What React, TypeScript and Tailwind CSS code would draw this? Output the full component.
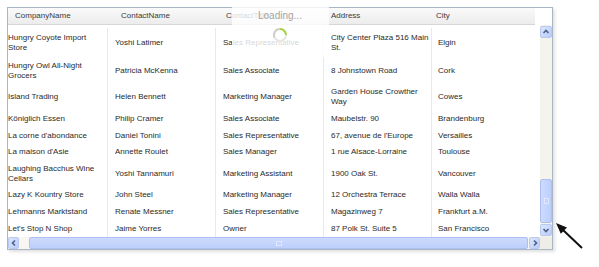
import React from 'react';

type Row = {
  h: string;
  cells: string[];
};

const rows: Row[] = [
  { h: 'h-[29px]', cells: ['Hungry Coyote Import\nStore', 'Yoshi Latimer', 'Sales Representative', 'City Center Plaza 516 Main\nSt.', 'Elgin'] },
  { h: 'h-[27px]', cells: ['Hungry Owl All-Night\nGrocers', 'Patricia McKenna', 'Sales Associate', '8 Johnstown Road', 'Cork'] },
  { h: 'h-[26px]', cells: ['Island Trading', 'Helen Bennett', 'Marketing Manager', 'Garden House Crowther\nWay', 'Cowes'] },
  { h: 'h-[17px]', cells: ['Königlich Essen', 'Philip Cramer', 'Sales Associate', 'Maubelstr. 90', 'Brandenburg'] },
  { h: 'h-[17px]', cells: ['La corne d\'abondance', 'Daniel Tonini', 'Sales Representative', '67, avenue de l\'Europe', 'Versailles'] },
  { h: 'h-[16px]', cells: ['La maison d\'Asie', 'Annette Roulet', 'Sales Manager', '1 rue Alsace-Lorraine', 'Toulouse'] },
  { h: 'h-[27px]', cells: ['Laughing Bacchus Wine\nCellars', 'Yoshi Tannamuri', 'Marketing Assistant', '1900 Oak St.', 'Vancouver'] },
  { h: 'h-[16px]', cells: ['Lazy K Kountry Store', 'John Steel', 'Marketing Manager', '12 Orchestra Terrace', 'Walla Walla'] },
  { h: 'h-[17px]', cells: ['Lehmanns Marktstand', 'Renate Messner', 'Sales Representative', 'Magazinweg 7', 'Frankfurt a.M.'] },
  { h: 'h-[17px]', cells: ['Let\'s Stop N Shop', 'Jaime Yorres', 'Owner', '87 Polk St. Suite 5', 'San Francisco'] },
];

const bodyCols = [
  'w-[100px] pl-0 border-r border-[#e9e9e9]',
  'w-[108px] pl-[7px] border-r border-[#e9e9e9]',
  'w-[108px] pl-[7px] border-r border-[#e9e9e9]',
  'w-[108px] pl-[7px] border-r border-[#e9e9e9]',
  'flex-1 pl-[6px]',
];

const headers = [
  { label: 'CompanyName', w: 'w-[106px]' },
  { label: 'ContactName', w: 'w-[105px]' },
  { label: 'ContactTitle', w: 'w-[105px]' },
  { label: 'Address', w: 'w-[105px]' },
  { label: 'City', w: 'flex-1' },
];

const Chevron: React.FC<{ dir: 'up' | 'down' | 'left' | 'right' }> = ({ dir }) => {
  const d = {
    up: 'M1.5 5 L4 2.5 L6.5 5',
    down: 'M1.5 3 L4 5.5 L6.5 3',
    left: 'M5 1.5 L2.5 4 L5 6.5',
    right: 'M3 1.5 L5.5 4 L3 6.5',
  }[dir];
  return (
    <svg width="8" height="8" viewBox="0 0 8 8">
      <path d={d} fill="none" stroke="#4d6185" strokeWidth="1.6" />
    </svg>
  );
};

const ScrollButton: React.FC<{ dir: 'up' | 'down' | 'left' | 'right'; className: string }> = ({ dir, className }) => (
  <div
    className={`${className} flex items-center justify-center rounded-[2px] border border-[#b7c9f3] bg-gradient-to-br from-[#dce6fd] to-[#b9cdfa]`}
  >
    <Chevron dir={dir} />
  </div>
);

export default function App() {
  return (
    <div className="relative w-[599px] h-[267px] bg-white pl-[7px] pt-[7px] font-['Liberation_Sans',Arial,sans-serif] text-[#2a2a2a]">
      <div className="flex flex-col w-[546px] h-[243px] border border-[#a9b6c6] bg-white shadow-[2px_2px_3px_rgba(0,0,0,0.12)]">
        {/* header */}
        <div className="flex h-[17px]">
          <div className="flex w-[527px] h-[17px] border-b border-[#d6d6d6] bg-gradient-to-b from-[#fafafa] to-[#ececec] text-[8px] text-[#3a3a3a]">
            {headers.map((c) => (
              <div key={c.label} className={`${c.w} pl-[7px] flex items-center`}>
                {c.label}
              </div>
            ))}
          </div>
          <div className="flex-1" />
        </div>

        {/* body + vertical scrollbar */}
        <div className="flex h-[212px]">
          <div className="w-[527px] h-[212px] flex flex-col justify-end overflow-hidden text-[8px] leading-[10px]">
            {rows.map((r, i) => (
              <div key={i} className={`flex ${r.h}`}>
                {r.cells.map((t, j) => (
                  <div key={j} className={`${bodyCols[j]} flex items-center whitespace-pre-line`}>
                    {t}
                  </div>
                ))}
              </div>
            ))}
          </div>
          <div className="w-[5px]" />
          <div className="w-[12px] flex flex-col bg-[#f4f3ec]">
            <ScrollButton dir="up" className="h-[12px] mt-[1px]" />
            <div className="flex-1" />
            <div className="h-[44px] rounded-[2px] border border-[#adc0f0] bg-gradient-to-r from-[#cddafd] to-[#bccffb] flex items-center justify-center">
              <div className="w-[5px] h-[6px] border border-[#dfe8fe]" />
            </div>
            <div className="h-[1px]" />
            <ScrollButton dir="down" className="h-[12px]" />
            <div className="h-[1px]" />
          </div>
        </div>

        {/* horizontal scrollbar */}
        <div className="flex h-[12px]">
          <div className="w-[532px] flex bg-[#f7f6f1]">
            <ScrollButton dir="left" className="w-[11px]" />
            <div className="w-[10px]" />
            <div className="flex-1 rounded-[2px] border border-[#adc0f0] bg-gradient-to-b from-[#cddafd] to-[#bccffb] flex items-center justify-center">
              <div className="w-[6px] h-[5px] border border-[#dfe8fe]" />
            </div>
            <div className="w-[1px]" />
            <ScrollButton dir="right" className="w-[11px]" />
          </div>
          <div className="flex-1 bg-[#efeee6]" />
        </div>
      </div>

      {/* loading overlay */}
      <div className="absolute left-[232px] top-[7px] w-[97px] h-[50px] bg-white/80" />
      <div className="absolute left-[258px] top-[10px] text-[10px] leading-[12px] text-[#a3a3a3]">Loading...</div>
      <svg className="absolute left-[272px] top-[27px]" width="16" height="16" viewBox="0 0 16 16">
        <circle cx="8" cy="8" r="6" fill="none" stroke="#e6e6e6" strokeWidth="2" />
        <path d="M2.5 10.5 A6 6 0 0 1 8 2" fill="none" stroke="#cfcfcf" strokeWidth="2" />
        <path d="M8 2 A6 6 0 0 1 14 8" fill="none" stroke="#a6d23c" strokeWidth="2" />
      </svg>

      {/* annotation arrow */}
      <svg className="absolute left-[540px] top-[210px]" width="59" height="57" viewBox="0 0 59 57">
        <line x1="23" y1="20" x2="42" y2="38" stroke="#111" strokeWidth="2" />
        <polygon points="16,13 20.8,23.8 27,17.4" fill="#111" />
      </svg>
    </div>
  );
}
